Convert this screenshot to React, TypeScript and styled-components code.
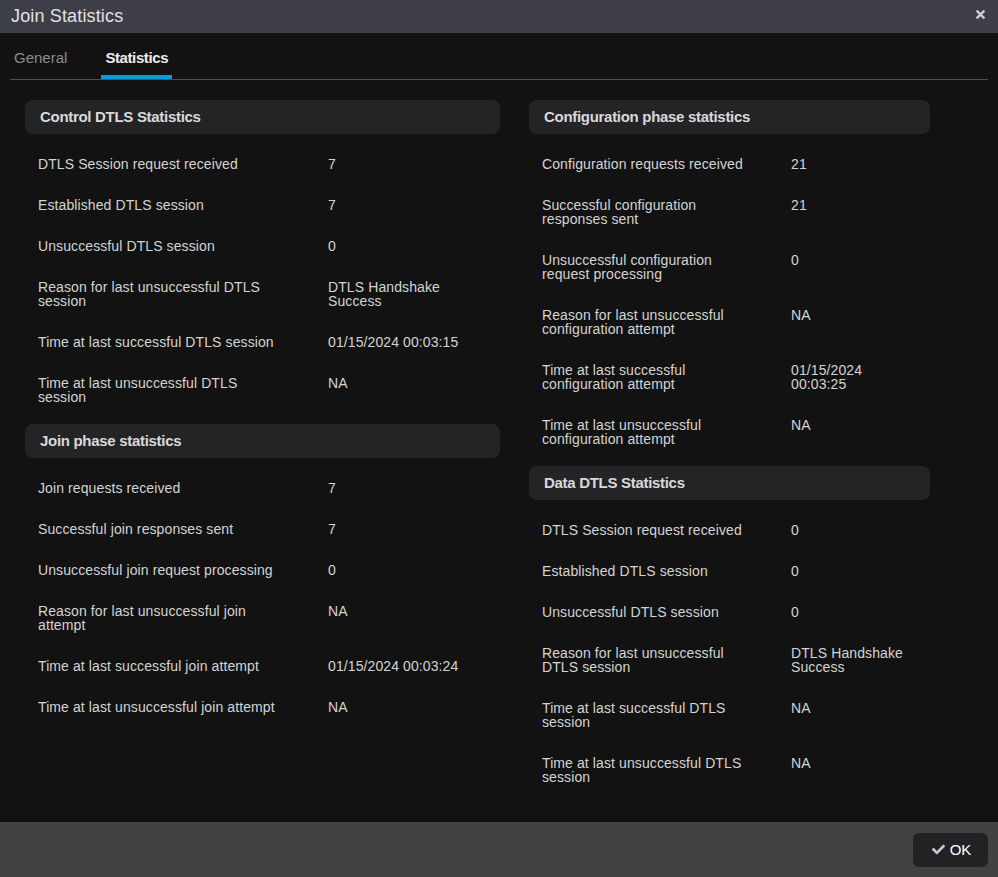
import styled, { createGlobalStyle } from "styled-components";
import { FaCheck, FaTimes } from "react-icons/fa";

const GlobalStyle = createGlobalStyle`
    html, body {
        margin: 0;
        padding: 0;
        background: #121212;
    }
    body {
        font-family: "Liberation Sans", Arial, sans-serif;
    }
`;

interface Stat {
    label: string;
    value: string;
}

interface Section {
    title: string;
    rows: Stat[];
}

// widths tuned so the labels wrap where the original table wraps them
interface ColumnSizes {
    width: number;
    label: number;
    labelText: number;
    value: number;
}

const leftSizes: ColumnSizes = { width: 475, label: 290, labelText: 244, value: 145 };
const rightSizes: ColumnSizes = { width: 401, label: 249, labelText: 210, value: 118 };

const leftSections: Section[] = [
    {
        title: "Control DTLS Statistics",
        rows: [
            { label: "DTLS Session request received", value: "7" },
            { label: "Established DTLS session", value: "7" },
            { label: "Unsuccessful DTLS session", value: "0" },
            { label: "Reason for last unsuccessful DTLS session", value: "DTLS Handshake Success" },
            { label: "Time at last successful DTLS session", value: "01/15/2024 00:03:15" },
            { label: "Time at last unsuccessful DTLS session", value: "NA" },
        ],
    },
    {
        title: "Join phase statistics",
        rows: [
            { label: "Join requests received", value: "7" },
            { label: "Successful join responses sent", value: "7" },
            { label: "Unsuccessful join request processing", value: "0" },
            { label: "Reason for last unsuccessful join attempt", value: "NA" },
            { label: "Time at last successful join attempt", value: "01/15/2024 00:03:24" },
            { label: "Time at last unsuccessful join attempt", value: "NA" },
        ],
    },
];

const rightSections: Section[] = [
    {
        title: "Configuration phase statistics",
        rows: [
            { label: "Configuration requests received", value: "21" },
            { label: "Successful configuration responses sent", value: "21" },
            { label: "Unsuccessful configuration request processing", value: "0" },
            { label: "Reason for last unsuccessful configuration attempt", value: "NA" },
            { label: "Time at last successful configuration attempt", value: "01/15/2024 00:03:25" },
            { label: "Time at last unsuccessful configuration attempt", value: "NA" },
        ],
    },
    {
        title: "Data DTLS Statistics",
        rows: [
            { label: "DTLS Session request received", value: "0" },
            { label: "Established DTLS session", value: "0" },
            { label: "Unsuccessful DTLS session", value: "0" },
            { label: "Reason for last unsuccessful DTLS session", value: "DTLS Handshake Success" },
            { label: "Time at last successful DTLS session", value: "NA" },
            { label: "Time at last unsuccessful DTLS session", value: "NA" },
        ],
    },
];

const Dialog = styled.div`
    display: flex;
    flex-direction: column;
    height: 100vh;
    background: #121212;
    color: #d4d4d4;
`;

const TitleBar = styled.div`
    height: 33px;
    flex: none;
    display: flex;
    align-items: center;
    justify-content: space-between;
    padding: 0 11px 0 11px;
    background: #3d3e47;
`;

const Title = styled.div`
    font-size: 18px;
    letter-spacing: 0.15px;
    color: #e2e2e4;
`;

const CloseButton = styled.span`
    display: flex;
    color: #cfcfd2;
    font-size: 13px;
    margin-top: -4px;
`;

const TabList = styled.div`
    display: flex;
    gap: 30px;
    margin: 0 10px;
    border-bottom: 1px solid #505050;
`;

const Tab = styled.div<{ $active?: boolean }>`
    margin-top: 16px;
    padding: 0 4px 8px;
    font-size: 15px;
    line-height: 18px;
    font-weight: ${props => props.$active ? "bold" : "normal"};
    letter-spacing: ${props => props.$active ? "-0.4px" : "0"};
    color: ${props => props.$active ? "#ececec" : "#8c8c8c"};
    border-bottom: 4px solid ${props => props.$active ? "#049fd9" : "transparent"};
`;

const Content = styled.div`
    flex: 1;
    display: flex;
    align-items: flex-start;
    gap: 29px;
    padding: 20px 25px 0;
`;

const Column = styled.div<{ $width: number }>`
    width: ${props => props.$width}px;
    display: flex;
    flex-direction: column;
`;

const SectionHeader = styled.div`
    height: 34px;
    display: flex;
    align-items: center;
    padding: 0 0 1px 15px;
    box-sizing: border-box;
    border-radius: 8px;
    background: #242426;
    font-size: 15px;
    font-weight: bold;
    letter-spacing: -0.3px;
    color: #d9d9db;
`;

const Rows = styled.div`
    display: flex;
    flex-direction: column;
    gap: 27px;
    padding: 23px 0 20px 13px;
`;

const Row = styled.div<{ $label: number; $value: number }>`
    display: grid;
    grid-template-columns: ${props => props.$label}px ${props => props.$value}px;
    font-size: 14px;
    line-height: 14px;
    letter-spacing: 0.1px;
`;

const Label = styled.div<{ $max: number }>`
    max-width: ${props => props.$max}px;
`;

const Value = styled.div``;

const Footer = styled.div`
    height: 55px;
    flex: none;
    display: flex;
    align-items: center;
    justify-content: flex-end;
    padding-right: 10px;
    background: #424242;
`;

const OkButton = styled.button`
    width: 75px;
    height: 34px;
    display: flex;
    align-items: center;
    justify-content: center;
    gap: 5px;
    border: none;
    border-radius: 6px;
    background: #222224;
    color: #ffffff;
    font-family: "Liberation Sans", Arial, sans-serif;
    font-size: 15px;
    padding: 0 0 0 2px;

    svg {
        color: #c4c8d2;
        font-size: 13px;
    }
`;

function StatColumn({ sections, sizes }: { sections: Section[]; sizes: ColumnSizes }) {
    return <Column $width={sizes.width}>
        {sections.map(section => (
            <div key={section.title}>
                <SectionHeader>{section.title}</SectionHeader>
                <Rows>
                    {section.rows.map(row => (
                        <Row key={row.label} $label={sizes.label} $value={sizes.value}>
                            <Label $max={sizes.labelText}>{row.label}</Label>
                            <Value>{row.value}</Value>
                        </Row>
                    ))}
                </Rows>
            </div>
        ))}
    </Column>;
}

export default function App() {
    return <>
        <GlobalStyle />
        <Dialog>
            <TitleBar>
                <Title>Join Statistics</Title>
                <CloseButton><FaTimes /></CloseButton>
            </TitleBar>
            <TabList>
                <Tab>General</Tab>
                <Tab $active>Statistics</Tab>
            </TabList>
            <Content>
                <StatColumn sections={leftSections} sizes={leftSizes} />
                <StatColumn sections={rightSections} sizes={rightSizes} />
            </Content>
            <Footer>
                <OkButton><FaCheck />OK</OkButton>
            </Footer>
        </Dialog>
    </>;
}
